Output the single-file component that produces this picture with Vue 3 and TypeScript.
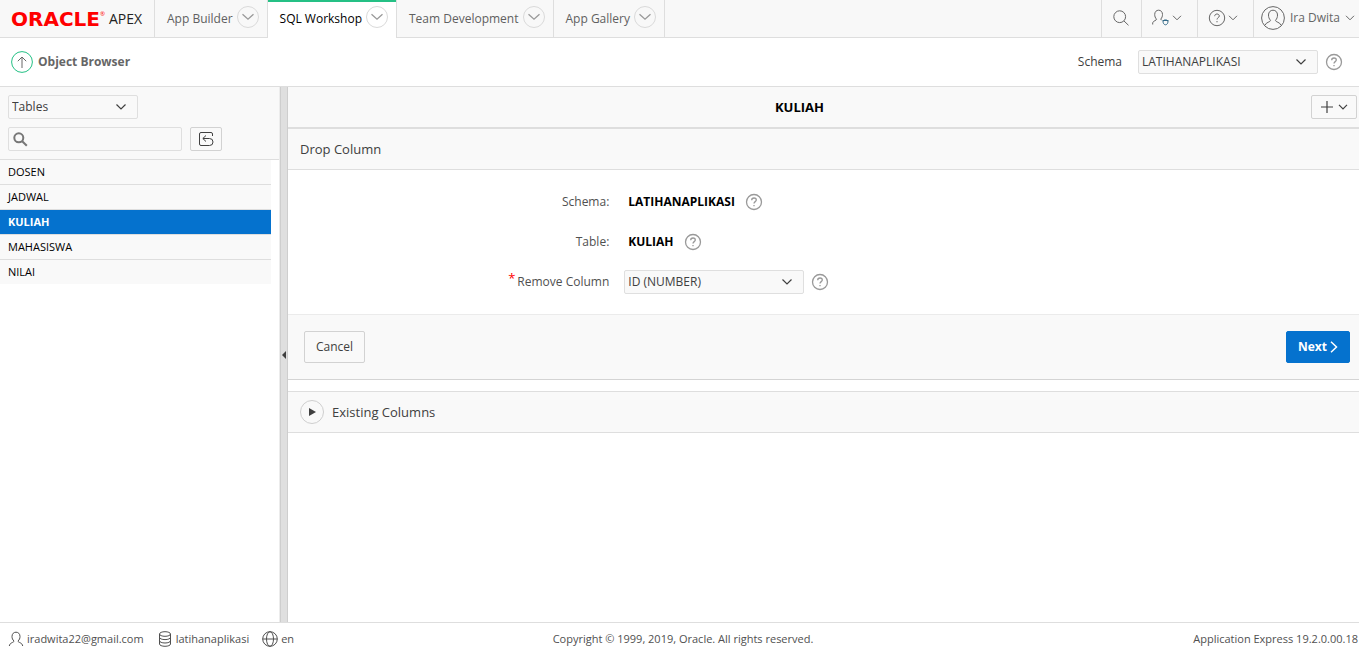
<script setup lang="ts">
import { ref } from 'vue'

interface Tab {
  label: string
  active?: boolean
}

const tabs: Tab[] = [
  { label: 'App Builder' },
  { label: 'SQL Workshop', active: true },
  { label: 'Team Development' },
  { label: 'App Gallery' },
]

const tables: string[] = ['DOSEN', 'JADWAL', 'KULIAH', 'MAHASISWA', 'NILAI']
const selected = ref('KULIAH')
const schema = ref('LATIHANAPLIKASI')
const objectType = ref('Tables')
const search = ref('')
const column = ref('ID (NUMBER)')
</script>

<template>
  <div class="page">
    <header class="topbar">
      <a class="logo" href="#" aria-label="Oracle APEX">
        <span class="oracle">ORACLE</span><span class="mark">®</span><span class="apex">APEX</span>
      </a>
      <nav class="tabs">
        <div v-for="tab in tabs" :key="tab.label" class="tab" :class="{ active: tab.active }">
          <a href="#">{{ tab.label }}</a>
          <button class="round" type="button" :aria-label="tab.label + ' menu'">
            <svg width="14" height="8" viewBox="0 0 14 8"><path d="M1.500 1.200 7 6.200l5.500-5" /></svg>
          </button>
        </div>
      </nav>
      <div class="tools">
        <button class="tool search-tool" type="button" aria-label="Search">
          <svg width="16" height="16" viewBox="0 0 16 16"><circle cx="6.7" cy="6.7" r="5.9" /><path d="m11 11 4.5 4.3" /></svg>
        </button>
        <button class="tool" type="button" aria-label="Administration">
          <svg width="18" height="18" viewBox="0 0 18 18">
            <path d="M4.500 10.200C3.300 8.900 2.700 7.300 2.700 5.500 2.700 2.800 4.400 1.200 6.600 1.200s3.900 1.600 3.900 4.300c0 1.700-.5 3.200-1.700 4.500M4.500 10.200c0 1.500-3 1.200-3.800 3.600v1.700M8.800 10l.5 1.200" />
            <path class="badge-icon" d="M10.500 11.500h6M11 12c0 2.200 1 3.800 2.500 3.800S16 14.200 16 12c-1-1.500-4-1.500-5 0Z" />
          </svg>
          <svg width="10" height="6" viewBox="0 0 10 6"><path d="m1 .8 4 4 4-4" /></svg>
        </button>
        <button class="tool" type="button" aria-label="Help">
          <svg width="18" height="18" viewBox="0 0 18 18"><circle cx="9" cy="9" r="7.700" /><path d="M6.700 7.200C6.700 5.800 7.700 5 9 5s2.300.8 2.300 2C11.300 8.600 9 8.700 9 10.500M9 12v1.300" /></svg>
          <svg width="10" height="6" viewBox="0 0 10 6"><path d="m1 .8 4 4 4-4" /></svg>
        </button>
        <button class="tool user" type="button">
          <svg width="24" height="24" viewBox="0 0 24 24">
            <circle cx="12" cy="12" r="11.400" />
            <path d="M9.500 14.300C8 12.700 7.500 11 7.500 9c0-3 2-4.800 4.500-4.800S16.500 6 16.500 9c0 2-.5 3.700-2 5.300M9.500 14.300c0 2-4.500 1.700-5.300 4.700M14.500 14.300c0 2 4.500 1.700 5.300 4.700" />
          </svg>
          <span>Ira Dwita</span>
          <svg class="user-arrow" width="10" height="6" viewBox="0 0 10 6"><path d="m1 .8 4 4 4-4" /></svg>
        </button>
      </div>
    </header>

    <div class="titlebar">
      <a class="up" href="#" aria-label="Up">
        <svg width="22" height="22" viewBox="0 0 22 22"><circle cx="11" cy="11" r="10.400" /><path d="M11 17V6M6.800 10.200 11 6l4.200 4.200" /></svg>
      </a>
      <h1>Object Browser</h1>
      <label for="schema">Schema</label>
      <div class="select wide">
        <select id="schema" v-model="schema"><option>LATIHANAPLIKASI</option></select>
        <svg width="12" height="8" viewBox="0 0 12 8"><path d="m1.500 1.500 4.500 4.500 4.500-4.500" /></svg>
      </div>
      <button class="help" type="button" aria-label="Help for schema">
        <svg width="18" height="18" viewBox="0 0 18 18"><circle cx="9" cy="9" r="7.500" /><path d="M6.700 7.200C6.700 5.800 7.700 5 9 5s2.300.8 2.300 2C11.300 8.600 9 8.700 9 10.500M9 12v1.300" /></svg>
      </button>
    </div>

    <div class="body">
      <aside class="sidebar">
        <div class="filters">
          <div class="select">
            <select v-model="objectType" aria-label="Object type"><option>Tables</option></select>
            <svg width="12" height="8" viewBox="0 0 12 8"><path d="m1.500 1.500 4.500 4.500 4.500-4.500" /></svg>
          </div>
          <div class="find">
            <div class="find-box">
              <svg width="15" height="15" viewBox="0 0 15 15"><circle cx="5.800" cy="5.800" r="4.500" /><path d="m9.200 9.200 4.600 4.600" /></svg>
              <input v-model="search" type="text" aria-label="Search objects" />
            </div>
            <button class="refresh" type="button" aria-label="Refresh">
              <svg width="16" height="16" viewBox="0 0 16 16"><path d="M14.500 5V3a1.500 1.500 0 0 0-1.500-1.500H3A1.500 1.500 0 0 0 1.500 3v10A1.500 1.500 0 0 0 3 14.500h8.500a3.500 3.500 0 0 0 0-7H5M8 4.500l-3.200 3L8 10.500" /></svg>
            </button>
          </div>
        </div>
        <ul class="objects">
          <li v-for="name in tables" :key="name">
            <button type="button" :class="{ current: name === selected }" @click="selected = name">{{ name }}</button>
          </li>
        </ul>
      </aside>

      <button class="splitter" type="button" aria-label="Collapse object list">
        <svg width="4" height="8" viewBox="0 0 4 8"><path d="M4 0v8L0 4z" /></svg>
      </button>

      <main class="main">
        <div class="object-head">
          <h2>KULIAH</h2>
          <button class="create" type="button" aria-label="Create">
            <svg width="12" height="12" viewBox="0 0 12 12"><path d="M6 0v12M0 6h12" /></svg>
            <svg width="10" height="6" viewBox="0 0 10 6"><path d="m1 .8 4 4 4-4" /></svg>
          </button>
        </div>
        <section>
          <h3 class="region-title">Drop Column</h3>
          <div class="form">
            <span class="label">Schema:</span>
            <div class="field">
              <strong>LATIHANAPLIKASI</strong>
              <button class="help" type="button" aria-label="Help for schema name">
                <svg width="18" height="18" viewBox="0 0 18 18"><circle cx="9" cy="9" r="7.500" /><path d="M6.700 7.200C6.700 5.800 7.700 5 9 5s2.300.8 2.300 2C11.300 8.600 9 8.700 9 10.500M9 12v1.300" /></svg>
              </button>
            </div>
            <span class="label">Table:</span>
            <div class="field">
              <strong>KULIAH</strong>
              <button class="help" type="button" aria-label="Help for table">
                <svg width="18" height="18" viewBox="0 0 18 18"><circle cx="9" cy="9" r="7.500" /><path d="M6.700 7.200C6.700 5.800 7.700 5 9 5s2.300.8 2.300 2C11.300 8.600 9 8.700 9 10.500M9 12v1.300" /></svg>
              </button>
            </div>
            <label class="label" for="column"><span class="required">*</span>Remove Column</label>
            <div class="field">
              <div class="select wide">
                <select id="column" v-model="column"><option>ID (NUMBER)</option></select>
                <svg width="12" height="8" viewBox="0 0 12 8"><path d="m1.500 1.500 4.500 4.500 4.500-4.500" /></svg>
              </div>
              <button class="help" type="button" aria-label="Help for remove column">
                <svg width="18" height="18" viewBox="0 0 18 18"><circle cx="9" cy="9" r="7.500" /><path d="M6.700 7.200C6.700 5.800 7.700 5 9 5s2.300.8 2.300 2C11.300 8.600 9 8.700 9 10.500M9 12v1.300" /></svg>
              </button>
            </div>
          </div>
          <div class="actions">
            <button class="btn" type="button">Cancel</button>
            <button class="btn primary" type="button">
              Next
              <svg width="8" height="12" viewBox="0 0 8 12"><path d="m1 .8 5.500 5.200L1 11.200" /></svg>
            </button>
          </div>
        </section>
        <section class="existing">
          <button class="expand" type="button" aria-label="Expand existing columns">
            <svg width="7" height="8" viewBox="0 0 7 8"><path d="M0 0v8l7-4z" /></svg>
          </button>
          <h3>Existing Columns</h3>
        </section>
      </main>
    </div>

    <footer class="footer">
      <div class="foot-left">
        <span>
          <svg width="16" height="16" viewBox="0 0 16 16"><path d="M6 10C4.600 8.800 4 7.300 4 5.500 4 2.700 5.800 1.200 8 1.200s4 1.500 4 4.300C12 7.300 11.400 8.800 10 10M6 10c0 1.700-4.200 1.300-4.700 5M10 10c0 1.700 4.200 1.300 4.700 5" /></svg>iradwita22@gmail.com
        </span>
        <span>
          <svg width="16" height="16" viewBox="0 0 16 16"><ellipse cx="8" cy="3" rx="5.500" ry="2.300" /><path d="M2.500 3v10c0 1.300 2.400 2.300 5.500 2.300s5.500-1 5.500-2.300V3M2.500 6.300c0 1.300 2.400 2.300 5.500 2.300s5.500-1 5.500-2.300M2.500 9.700C2.500 11 4.900 12 8 12s5.500-1 5.500-2.300" /></svg>latihanaplikasi
        </span>
        <span>
          <svg width="16" height="16" viewBox="0 0 16 16"><circle cx="8" cy="8" r="7.300" /><ellipse cx="8" cy="8" rx="3.500" ry="7.300" /><path d="M.7 8h14.600" /></svg>en
        </span>
      </div>
      <span>Copyright © 1999, 2019, Oracle. All rights reserved.</span>
      <span class="foot-right">Application Express 19.2.0.00.18</span>
    </footer>
  </div>
</template>

<style>
body {
  margin: 0;
}
</style>

<style scoped>
* {
  box-sizing: border-box;
}
.page {
  display: flex;
  flex-direction: column;
  min-height: 100vh;
  background: #fff;
  color: #404040;
  font-family: "Open Sans", "Noto Sans", sans-serif;
  font-size: 12px;
  line-height: 16px;
}
button,
input,
select {
  margin: 0;
  padding: 0;
  border: 0;
  background: none;
  color: inherit;
  font: inherit;
}
a {
  color: inherit;
  text-decoration: none;
}
h1,
h2,
h3 {
  margin: 0;
}
svg {
  display: block;
  flex: none;
  fill: none;
  stroke: currentColor;
}
.topbar {
  display: flex;
  height: 38px;
  background: #f8f8f8;
  box-shadow: inset 0 -1px #dedede;
}
.logo {
  display: flex;
  align-items: center;
  width: 155px;
  padding-left: 11px;
  border-right: 1px solid #dedede;
}
.oracle {
  color: #f00;
  font-family: "DejaVu Sans", sans-serif;
  font-size: 20px;
  font-weight: 700;
}
.mark {
  align-self: flex-start;
  margin-right: 4px;
  padding-top: 6px;
  color: #f00;
  font-size: 6px;
}
.apex {
  color: #222;
  font-size: 14px;
}
.tabs {
  display: flex;
}
.tab {
  display: flex;
  align-items: center;
  gap: 4px;
  padding: 0 8px 4px 12px;
  border-right: 1px solid #dedede;
  color: #606060;
}
.tab a {
  padding-top: 3px;
}
.tab.active {
  background: #fff;
  color: #000;
  box-shadow: inset 0 2px #25c085;
}
.round {
  display: grid;
  place-items: center;
  width: 22px;
  height: 22px;
  border: 1px solid #dadada;
  border-radius: 50%;
  color: #999;
  stroke-width: 1.3;
}
.tools {
  display: flex;
  margin-left: auto;
}
.tool {
  display: flex;
  align-items: center;
  justify-content: center;
  gap: 2px;
  width: 56px;
  padding: 0 6px 2px 0;
  border-left: 1px solid #dedede;
  color: #666;
  white-space: nowrap;
}
.search-tool {
  width: 40px;
  padding-right: 2px;
}
.badge-icon {
  color: #336a88;
}
.user {
  justify-content: flex-start;
  gap: 5px;
  width: 106px;
  padding: 0 4px 2px 7px;
}
.user-arrow {
  margin-left: auto;
}
.titlebar {
  display: flex;
  align-items: center;
  height: 49px;
  padding: 0 16px 0 11px;
  border-bottom: 1px solid #dedede;
}
.up {
  color: #666;
}
.up circle {
  stroke: #25c085;
}
.titlebar h1 {
  margin: 0 auto 0 5px;
  color: #666;
  font-size: 12px;
  font-weight: 700;
}
.titlebar label {
  margin-right: 16px;
}
.select {
  position: relative;
  width: 130px;
  height: 24px;
}
.select.wide {
  width: 180px;
}
.select select {
  width: 100%;
  height: 100%;
  padding: 0 24px 0 3px;
  appearance: none;
  background: #f9f9f9;
  border: 1px solid #dfdfdf;
  border-radius: 2px;
}
.select svg {
  position: absolute;
  top: 8px;
  right: 11px;
  pointer-events: none;
  stroke-width: 1.2;
}
.help {
  margin-left: 7px;
  color: #999;
  stroke-width: 1.3;
}
.body {
  display: flex;
  flex: 1;
}
.sidebar {
  width: 280px;
  border-right: 1px solid #ececec;
}
.filters {
  display: grid;
  gap: 8px;
  padding: 8px;
  background: #f9f9f9;
  border-bottom: 1px solid #dedede;
}
.find {
  display: flex;
  gap: 8px;
}
.find-box {
  position: relative;
  width: 174px;
  height: 24px;
}
.find-box input {
  width: 100%;
  height: 100%;
  padding: 0 4px 0 24px;
  background: #f9f9f9;
  border: 1px solid #dfdfdf;
  border-radius: 2px;
}
.find-box svg {
  position: absolute;
  top: 5px;
  left: 5px;
  color: #777;
  stroke-width: 2;
}
.refresh {
  display: grid;
  place-items: center;
  width: 32px;
  height: 24px;
  border: 1px solid #d2d2d2;
  border-radius: 2px;
}
.objects {
  margin: 0;
  padding: 0 8px 0 0;
  list-style: none;
  font-size: 11px;
}
.objects li + li {
  border-top: 1px solid #dedede;
}
.objects button {
  display: block;
  width: 100%;
  height: 24px;
  padding: 0 8px;
  background: #f9f9f9;
  color: #000;
  text-align: left;
}
.objects .current {
  background: #0572ce;
  color: #fff;
  font-weight: 700;
}
.splitter {
  display: grid;
  place-items: center;
  width: 8px;
  padding-right: 1px;
  background: #dfdfdf;
  border: solid #cecece;
  border-width: 0 1px;
  color: #404040;
}
.splitter svg,
.expand svg {
  fill: currentColor;
  stroke: none;
}
.main {
  flex: 1;
  min-width: 0;
}
.object-head {
  display: flex;
  align-items: center;
  height: 42px;
  padding-right: 2px;
  background: #f9f9f9;
  border-bottom: 2px solid #dedede;
}
.object-head h2 {
  flex: 1;
  color: #000;
  font-size: 13px;
  font-weight: 700;
  text-align: center;
}
.create {
  display: flex;
  align-items: center;
  justify-content: center;
  gap: 5px;
  width: 46px;
  height: 24px;
  border: 1px solid #d2d2d2;
  border-radius: 2px;
  stroke-width: 1.2;
}
.region-title {
  height: 41px;
  padding: 0 12px;
  background: #f9f9f9;
  border-bottom: 1px solid #dedede;
  font-size: 13px;
  font-weight: 400;
  line-height: 40px;
}
.form {
  display: grid;
  grid-template-columns: 30% 1fr;
  grid-auto-rows: 40px;
  align-items: center;
  column-gap: 15px;
  padding: 12px 0;
}
.label {
  display: flex;
  align-items: center;
  justify-content: flex-end;
  color: #505050;
}
.required {
  align-self: flex-start;
  height: 24px;
  margin-right: 2px;
  color: #f00;
  font-size: 13px;
}
.field {
  display: flex;
  align-items: center;
}
.field strong {
  margin: 0 3px 0 4px;
  color: #000;
}
.actions {
  display: flex;
  justify-content: space-between;
  padding: 16px 9px 16px 16px;
  background: #f9f9f9;
  border-top: 1px solid #ebebeb;
  border-bottom: 1px solid #d4d4d4;
}
.btn {
  display: flex;
  align-items: center;
  gap: 3px;
  height: 32px;
  padding: 0 11px;
  border: 1px solid #d2d2d2;
  border-radius: 2px;
}
.primary {
  background: #0572ce;
  border-color: #0572ce;
  color: #fff;
  font-weight: 700;
}
.primary svg {
  stroke-width: 1.5;
}
.existing {
  display: flex;
  align-items: center;
  gap: 8px;
  height: 42px;
  margin-top: 11px;
  padding: 0 12px;
  background: #f9f9f9;
  border: solid #dedede;
  border-width: 1px 0;
}
.existing h3 {
  font-size: 13px;
  font-weight: 400;
}
.expand {
  display: grid;
  place-items: center;
  width: 24px;
  height: 24px;
  border: 1px solid #cfcfcf;
  border-radius: 50%;
}
.footer {
  display: grid;
  grid-template-columns: 1fr auto 1fr;
  align-items: center;
  height: 25px;
  padding: 8px 1px 0 8px;
  border-top: 1px solid #dedede;
  color: #505050;
  font-size: 11px;
}
.foot-left {
  display: flex;
  gap: 13px;
}
.foot-left span {
  display: flex;
  align-items: center;
  gap: 3px;
}
.foot-right {
  text-align: right;
}
</style>
